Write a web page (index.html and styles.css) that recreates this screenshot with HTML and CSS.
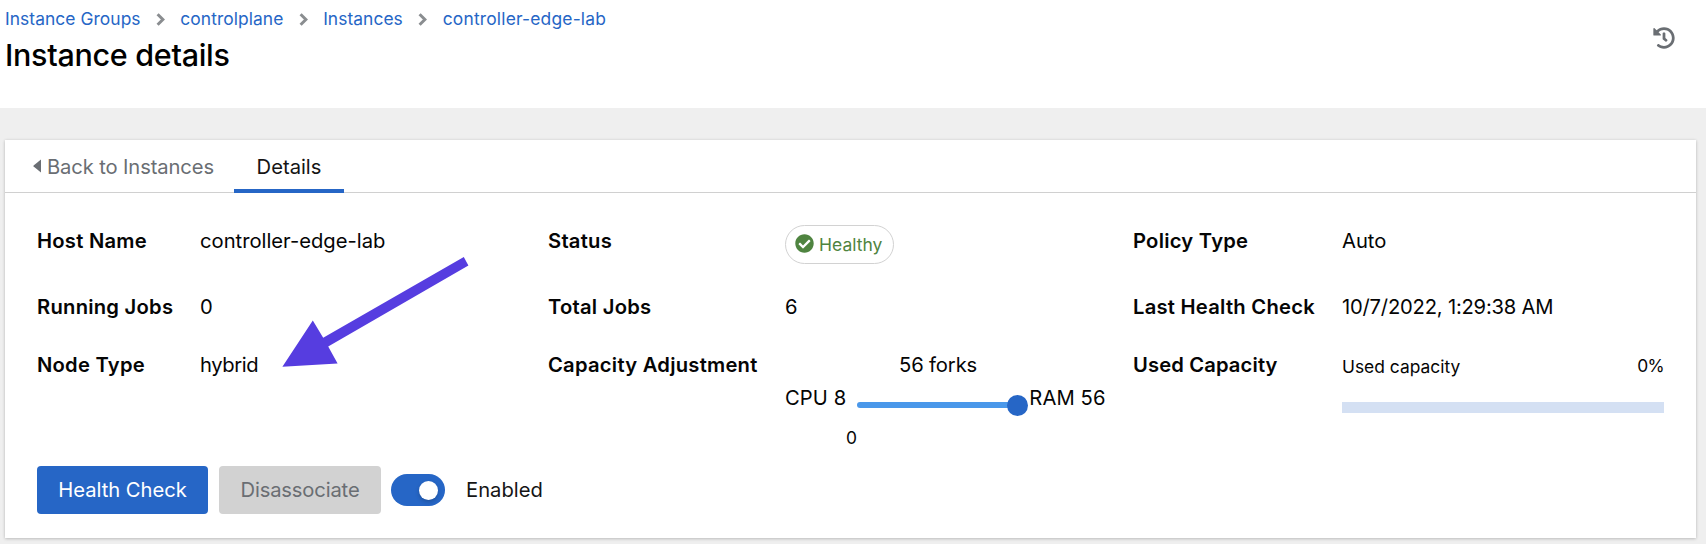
FILE: index.html
```html
<!DOCTYPE html>
<html lang="en">
<head>
<meta charset="utf-8">
<title>Instance details</title>
<link rel="stylesheet" href="styles.css">
</head>
<body>
<header class="page-header">
  <div>
    <nav class="breadcrumb">
      <a class="crumb">Instance Groups</a>
      <svg class="chevron" viewBox="0 0 9 13"><path d="M1.6 1.2 6.9 6.5 1.6 11.8"/></svg>
      <a class="crumb">controlplane</a>
      <svg class="chevron" viewBox="0 0 9 13"><path d="M1.6 1.2 6.9 6.5 1.6 11.8"/></svg>
      <a class="crumb">Instances</a>
      <svg class="chevron" viewBox="0 0 9 13"><path d="M1.6 1.2 6.9 6.5 1.6 11.8"/></svg>
      <a class="crumb crumb-host">controller-edge-lab</a>
    </nav>
    <h1 class="title">Instance details</h1>
  </div>
  <svg class="history" viewBox="0 0 512 512"><path d="M504 255.531c.253 136.64-111.18 248.372-247.82 248.468-59.015.042-113.223-20.53-155.822-54.911-11.077-8.94-11.905-25.541-1.839-35.607l11.267-11.267c8.609-8.609 22.353-9.551 31.891-1.984C173.062 425.135 212.781 440 256 440c101.705 0 184-82.311 184-184 0-101.705-82.311-184-184-184-48.814 0-93.149 18.969-126.068 49.932l50.754 50.754c10.08 10.08 2.941 27.314-11.313 27.314H24c-8.837 0-16-7.163-16-16V38.627c0-14.254 17.234-21.393 27.314-11.314l49.372 49.372C129.209 34.136 189.552 8 256 8c136.81 0 247.747 110.78 248 247.531zm-180.912 78.784l9.823-12.63c8.138-10.463 6.253-25.542-4.21-33.679L288 256.349V152c0-13.255-10.745-24-24-24h-16c-13.255 0-24 10.745-24 24v135.651l65.409 50.874c10.463 8.137 25.541 6.253 33.679-4.21z"/></svg>
</header>
<main class="card">
  <nav class="tabs">
    <a class="tab tab-back"><svg class="caret" viewBox="0 0 8 14"><path d="M8 .6v12.8L.6 7.6Q0 7 .6 6.4z"/></svg><span>Back to Instances</span></a>
    <a class="tab tab-active">Details</a>
  </nav>
  <dl class="details">
    <dt>Host Name</dt><dd>controller-edge-lab</dd>
    <dt>Status</dt>
    <dd><span class="status"><svg class="check" viewBox="0 0 512 512"><path d="M504 256c0 136.967-111.033 248-248 248S8 392.967 8 256 119.033 8 256 8s248 111.033 248 248zM227.314 387.314l184-184c6.248-6.248 6.248-16.379 0-22.627l-22.627-22.627c-6.248-6.249-16.379-6.249-22.628 0L216 308.118l-70.059-70.059c-6.248-6.248-16.379-6.248-22.628 0l-22.627 22.627c-6.248 6.248-6.248 16.379 0 22.627l104 104c6.249 6.249 16.379 6.249 22.628.001z"/></svg>Healthy</span></dd>
    <dt>Policy Type</dt><dd>Auto</dd>
    <dt>Running Jobs</dt><dd>0</dd>
    <dt>Total Jobs</dt><dd>6</dd>
    <dt>Last Health Check</dt><dd class="date">10/7/2022, 1:29:38 AM</dd>
    <dt>Node Type</dt><dd class="hybrid">hybrid</dd>
    <dt>Capacity Adjustment</dt>
    <dd class="capacity">
      <div class="forks">56 forks</div>
      <div class="slider-row">
        <span>CPU 8</span>
        <div class="slider"><div class="track"></div><div class="thumb"></div></div>
        <span>RAM 56</span>
      </div>
      <div class="slider-value">0</div>
    </dd>
    <dt class="used">Used Capacity</dt>
    <dd>
      <div class="usage"><span>Used capacity</span><span class="percent">0%</span></div>
      <div class="bar"></div>
    </dd>
  </dl>
  <div class="actions">
    <button class="button primary">Health Check</button>
    <button class="button disabled" disabled>Disassociate</button>
    <div class="toggle"><div class="knob"></div></div>
    <span class="enabled">Enabled</span>
  </div>
</main>
<svg class="arrow" viewBox="0 0 188 112"><path d="M182.8 1 187.4 9.4 47.2 90.4l9.4 17-55.2 3.3L31.8 64.5l10.4 17.2z"/></svg>
</body>
</html>
```
FILE: styles.css
```css
* { box-sizing: border-box; }
body {
  margin: 0;
  height: 544px;
  overflow: hidden;
  background: #efefef;
  color: #050505;
  font: 20.2px/30px Inter, "Liberation Sans", sans-serif;
}
.page-header {
  display: flex;
  justify-content: space-between;
  height: 108px;
  padding: 4px 31px 0 5px;
  background: #fff;
}
.breadcrumb {
  display: flex;
  align-items: center;
  height: 30px;
  font-size: 17.4px;
  line-height: 30px;
  letter-spacing: 0.06px;
  color: #2666c6;
}
.crumb-host { letter-spacing: 0.2px; }
.chevron {
  width: 9px;
  height: 13px;
  margin: 0 15.4px;
  fill: none;
  stroke: #8a8d90;
  stroke-width: 3;
}
.title {
  margin: 0;
  padding-top: 1px;
  color: #000;
  font-size: 30.5px;
  line-height: 40px;
  font-weight: 500;
  letter-spacing: -0.3px;
}
.history { width: 22px; height: 22px; margin-top: 23px; fill: #6a6e73; }
.card {
  width: 1691px;
  height: 398px;
  margin: 32px 0 0 5px;
  background: #fff;
  box-shadow: 0 1px 3px rgba(0, 0, 0, .18), 0 0 3px rgba(0, 0, 0, .08);
}
.tabs {
  display: flex;
  height: 53px;
  padding-left: 28px;
  border-bottom: 1px solid #d0d0d0;
}
.tab { padding-top: 12px; }
.tab-back {
  display: flex;
  gap: 6px;
  width: 201px;
  color: #6a6e73;
  letter-spacing: -0.12px;
}
.caret { width: 8px; height: 14px; margin-top: 7px; fill: #6a6e73; }
.tab-active {
  width: 110px;
  height: 53px;
  border-bottom: 4px solid #2666c6;
  text-align: center;
  color: #151515;
}
.details {
  display: grid;
  grid-template-columns: 163px 348px 237px 348px 209px 322px;
  grid-template-rows: 38px 30px 96px;
  row-gap: 28px;
  margin: 0;
  padding: 33px 32px 0;
}
dt { font-weight: 600; letter-spacing: 0.25px; white-space: nowrap; }
.used { letter-spacing: 0.13px; }
dd { margin: 0; white-space: nowrap; }
.date { letter-spacing: -0.2px; }
.hybrid { letter-spacing: -0.4px; }
.status {
  display: flex;
  align-items: center;
  gap: 5px;
  width: 109px;
  height: 39px;
  margin-top: -1px;
  padding-left: 9px;
  border: 1px solid #d2d2d2;
  border-radius: 20px;
  font-size: 17.5px;
  color: #4f8440;
}
.check { width: 19px; height: 19px; margin-top: -2px; fill: #4f8440; }
.capacity { width: 322px; }
.forks { padding-left: 114px; letter-spacing: -0.12px; }
.slider-row { display: flex; height: 30px; margin-top: 3px; letter-spacing: 0.1px; }
.slider { display: flex; align-items: center; width: 171px; height: 30px; margin: 7px 1px 0 11px; }
.track { width: 151px; height: 6px; border-radius: 3px 0 0 3px; background: #4a98ea; }
.thumb { width: 21px; height: 21px; margin-left: -1px; border-radius: 50%; background: #2666c6; }
.slider-value { width: 133px; padding-top: 10px; text-align: center; font-size: 17.4px; }
.usage {
  display: flex;
  justify-content: space-between;
  height: 52px;
  padding-top: 2px;
  font-size: 17.4px;
}
.percent { letter-spacing: -0.6px; margin-top: -1px; }
.bar { height: 11px; background: #d4e0f3; }
.actions { display: flex; align-items: center; height: 48px; margin: 20px 32px 0; }
.button {
  height: 48px;
  padding: 0;
  border: 0;
  border-radius: 4px;
  font: inherit;
}
.primary { width: 171px; background: #2666c6; color: #fff; letter-spacing: -0.03px; }
.disabled { width: 162px; margin-left: 11px; background: #d2d2d2; color: #6a6e73; letter-spacing: -0.15px; }
.toggle {
  display: flex;
  align-items: center;
  width: 54px;
  height: 32px;
  margin-left: 10px;
  padding-left: 28px;
  border-radius: 16px;
  background: #2666c6;
}
.knob { width: 19px; height: 19px; border-radius: 50%; background: #fff; box-shadow: 0 2px 4px rgba(0, 0, 0, .2); }
.enabled { margin-left: 21px; color: #151515; }
.arrow { position: absolute; left: 281px; top: 256px; width: 188px; height: 112px; fill: #563de0; }
```
